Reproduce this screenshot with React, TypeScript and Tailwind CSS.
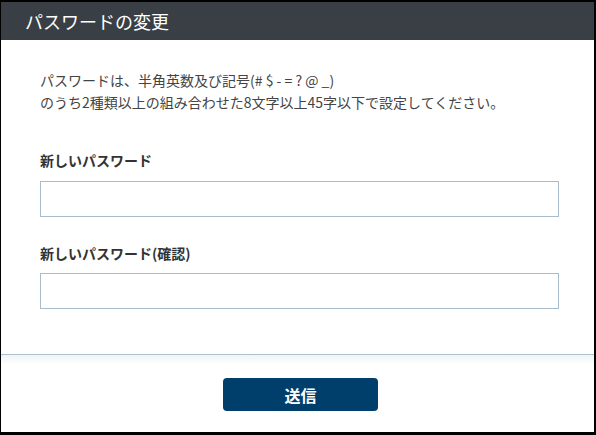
import React from "react";

export default function App() {
  return (
    <div
      className="w-[596px] h-[435px] bg-black pl-px pt-[2px] pr-[2px] pb-[3px] overflow-hidden"
      style={{ fontFamily: '"Noto Sans CJK JP", "Noto Sans", sans-serif' }}
    >
      <div className="w-full h-full bg-white flex flex-col">
        <div className="h-[38px] bg-[#393f45] flex items-center pl-[24px] shrink-0">
          <span className="text-white text-[18px] leading-none">パスワードの変更</span>
        </div>
        <div className="pl-[39px] pr-[35px] pt-[29px] pb-[45px]">
          <p className="text-[14px] leading-[22px] text-[#444]">
            パスワードは、半角英数及び記号(# $ - = ? @ _)
            <br />
            のうち2種類以上の組み合わせた8文字以上45字以下で設定してください。
          </p>
          <div className="mt-[37px] text-[14px] leading-[20px] font-bold text-[#333]">新しいパスワード</div>
          <input
            type="password"
            className="mt-[11px] block w-full h-[36px] border border-[#a9bccb] bg-white outline-none"
          />
          <div className="mt-[26px] text-[14px] leading-[20px] font-bold text-[#333]">新しいパスワード(確認)</div>
          <input
            type="password"
            className="mt-[10px] block w-full h-[36px] border border-[#a9bccb] bg-white outline-none"
          />
        </div>
        <div className="h-[1px] bg-[#adc0d0] shrink-0" />
        <div className="flex-1 bg-gradient-to-b from-[#f1f3f5] to-white to-[10px] flex justify-center pt-[23px]">
          <button className="w-[155px] h-[33px] rounded-[4px] bg-[#003f6c] text-white font-bold text-[16px] ml-[6px]">
            送信
          </button>
        </div>
      </div>
    </div>
  );
}
